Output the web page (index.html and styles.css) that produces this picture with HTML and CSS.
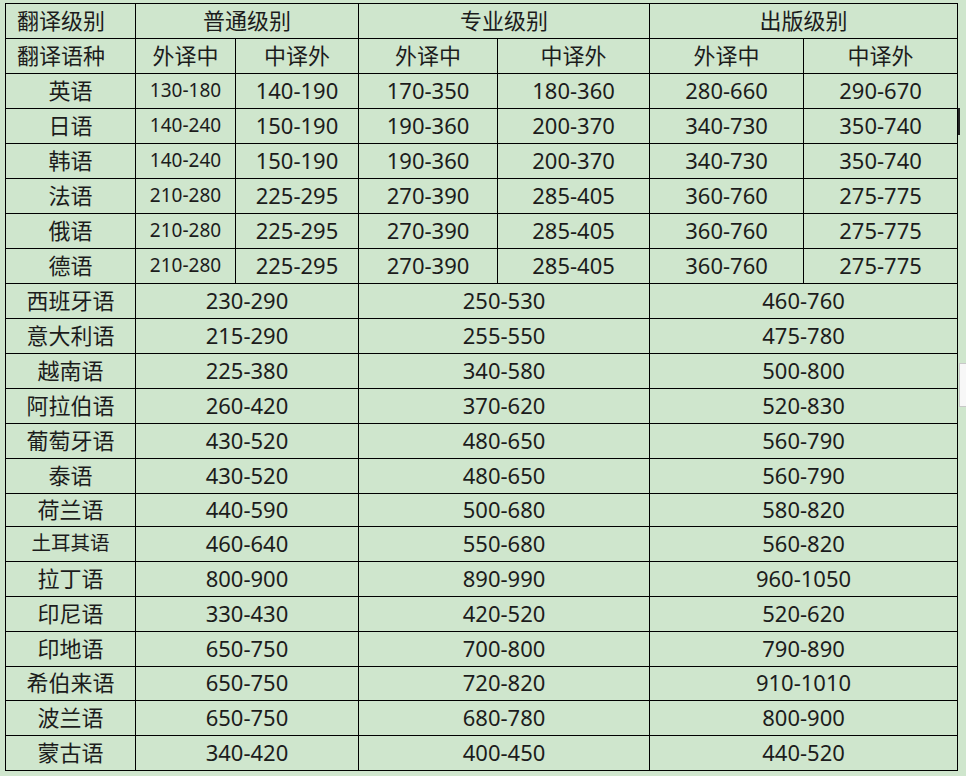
FILE: index.html
```html
<!DOCTYPE html>
<html lang="zh">
<head>
<meta charset="utf-8">
<link rel="stylesheet" href="styles.css">
</head>
<body>
<table class="price">
  <colgroup>
    <col class="c0"><col class="c1"><col class="c2"><col class="c3"><col class="c4"><col class="c5"><col class="c6">
  </colgroup>
  <tr><td class="lead">翻译级别</td><td colspan="2">普通级别</td><td colspan="2">专业级别</td><td colspan="2">出版级别</td></tr>
  <tr><td class="lead">翻译语种</td><td>外译中</td><td>中译外</td><td>外译中</td><td>中译外</td><td>外译中</td><td>中译外</td></tr>
  <tr><td>英语</td><td class="sm">130-180</td><td>140-190</td><td>170-350</td><td>180-360</td><td>280-660</td><td>290-670</td></tr>
  <tr><td>日语</td><td class="sm">140-240</td><td>150-190</td><td>190-360</td><td>200-370</td><td>340-730</td><td>350-740</td></tr>
  <tr><td>韩语</td><td class="sm">140-240</td><td>150-190</td><td>190-360</td><td>200-370</td><td>340-730</td><td>350-740</td></tr>
  <tr><td>法语</td><td class="sm">210-280</td><td>225-295</td><td>270-390</td><td>285-405</td><td>360-760</td><td>275-775</td></tr>
  <tr><td>俄语</td><td class="sm">210-280</td><td>225-295</td><td>270-390</td><td>285-405</td><td>360-760</td><td>275-775</td></tr>
  <tr><td>德语</td><td class="sm">210-280</td><td>225-295</td><td>270-390</td><td>285-405</td><td>360-760</td><td>275-775</td></tr>
  <tr><td>西班牙语</td><td colspan="2">230-290</td><td colspan="2">250-530</td><td colspan="2">460-760</td></tr>
  <tr><td>意大利语</td><td colspan="2">215-290</td><td colspan="2">255-550</td><td colspan="2">475-780</td></tr>
  <tr><td>越南语</td><td colspan="2">225-380</td><td colspan="2">340-580</td><td colspan="2">500-800</td></tr>
  <tr><td>阿拉伯语</td><td colspan="2">260-420</td><td colspan="2">370-620</td><td colspan="2">520-830</td></tr>
  <tr><td>葡萄牙语</td><td colspan="2">430-520</td><td colspan="2">480-650</td><td colspan="2">560-790</td></tr>
  <tr><td>泰语</td><td colspan="2">430-520</td><td colspan="2">480-650</td><td colspan="2">560-790</td></tr>
  <tr class="short"><td>荷兰语</td><td colspan="2">440-590</td><td colspan="2">500-680</td><td colspan="2">580-820</td></tr>
  <tr><td class="sm2">土耳其语</td><td colspan="2">460-640</td><td colspan="2">550-680</td><td colspan="2">560-820</td></tr>
  <tr><td>拉丁语</td><td colspan="2">800-900</td><td colspan="2">890-990</td><td colspan="2">960-1050</td></tr>
  <tr><td>印尼语</td><td colspan="2">330-430</td><td colspan="2">420-520</td><td colspan="2">520-620</td></tr>
  <tr><td>印地语</td><td colspan="2">650-750</td><td colspan="2">700-800</td><td colspan="2">790-890</td></tr>
  <tr class="short1"><td>希伯来语</td><td colspan="2">650-750</td><td colspan="2">720-820</td><td colspan="2">910-1010</td></tr>
  <tr><td>波兰语</td><td colspan="2">650-750</td><td colspan="2">680-780</td><td colspan="2">800-900</td></tr>
  <tr><td>蒙古语</td><td colspan="2">340-420</td><td colspan="2">400-450</td><td colspan="2">440-520</td></tr>
</table>
<div class="caret"></div>
<div class="handle"></div>
</body>
</html>
```

FILE: styles.css
```css
html, body {
  margin: 0;
  padding: 0;
  background: #cfe6cd;
  width: 966px;
  height: 776px;
  overflow: hidden;
}
body {
  position: relative;
  padding: 3px 0 0 5px;
  box-sizing: border-box;
  font-family: "Noto Sans", "Noto Sans CJK SC", sans-serif;
  color: #1c1c1c;
}
.price {
  border-collapse: collapse;
  table-layout: fixed;
  width: 952px;
  border: 1px solid #000;
}
.c0 { width: 130px; }
.c1 { width: 100px; }
.c2 { width: 123px; }
.c3 { width: 139px; }
.c4 { width: 152px; }
.c5 { width: 154px; }
.c6 { width: 154px; }
.price tr { height: 35px; }
.price tr.short { height: 33px; }
.price tr.short1 { height: 34px; }
.price td {
  border: 1px solid #000;
  padding: 0 0 3px 0;
  text-align: center;
  vertical-align: middle;
  font-size: 22px;
  line-height: 26px;
  white-space: nowrap;
  overflow: hidden;
}
.price td.lead {
  text-align: left;
  padding-left: 11px;
}
.price td.sm { font-size: 19px; }
.price td.sm2 { font-size: 19.5px; }
.caret {
  position: absolute;
  left: 958px;
  top: 108px;
  width: 2px;
  height: 27px;
  background: #222;
}
.handle {
  position: absolute;
  left: 959px;
  top: 363px;
  width: 10px;
  height: 44px;
  background: #f7f7f7;
  border: 1px solid #c8c8c8;
  box-sizing: border-box;
}
```
